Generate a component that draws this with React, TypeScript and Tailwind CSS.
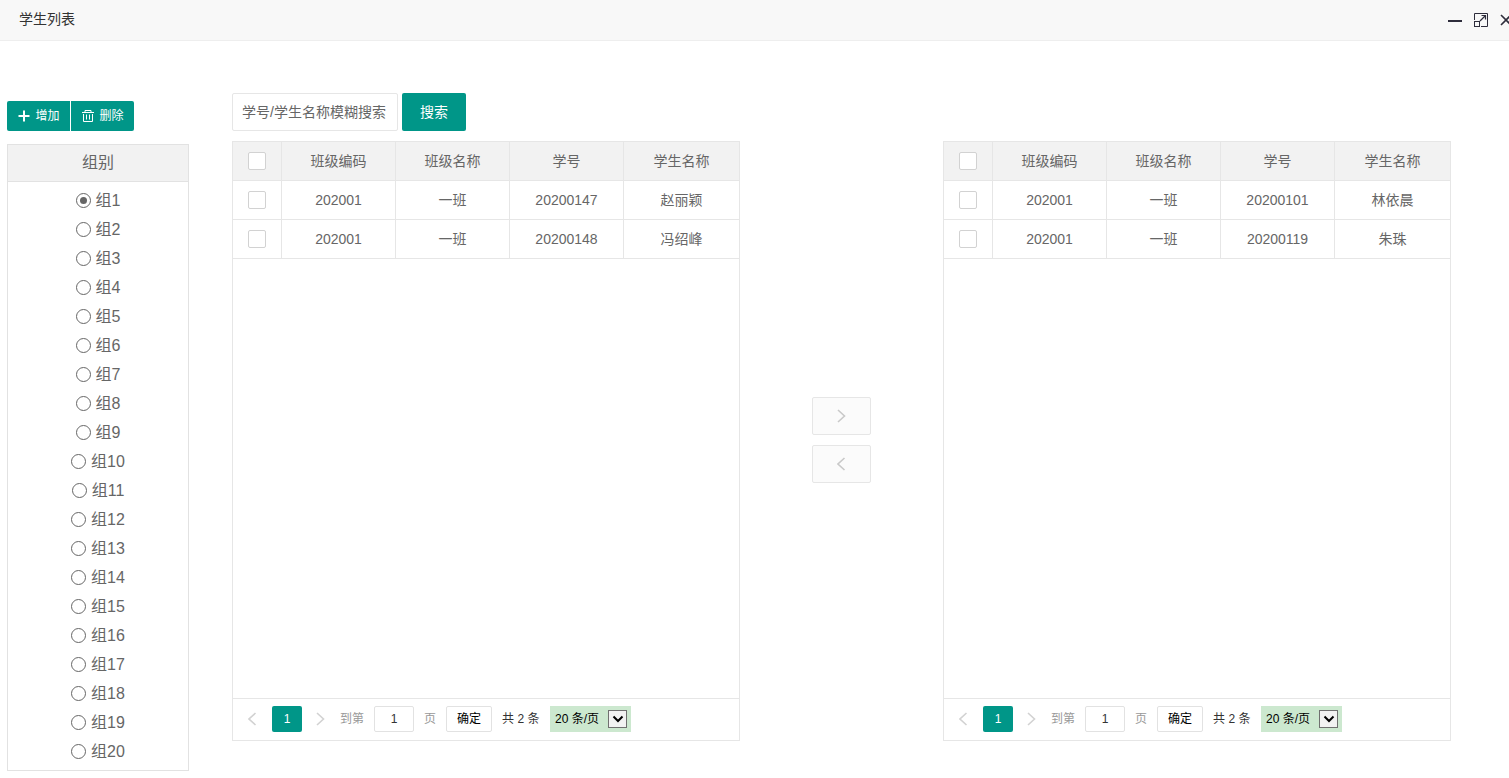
import React, { useState } from 'react';

type Student = { classCode: string; className: string; no: string; name: string };

const sourceStudents: Student[] = [
  { classCode: '202001', className: '一班', no: '20200147', name: '赵丽颖' },
  { classCode: '202001', className: '一班', no: '20200148', name: '冯绍峰' },
];

const groupStudents: Student[] = [
  { classCode: '202001', className: '一班', no: '20200101', name: '林依晨' },
  { classCode: '202001', className: '一班', no: '20200119', name: '朱珠' },
];

const groups = Array.from({ length: 20 }, (_, i) => `组${i + 1}`);

function Chevron({ direction, className }: { direction: 'left' | 'right'; className: string }) {
  return (
    <svg viewBox="0 0 10 14" className={className} fill="none" stroke="currentColor" strokeWidth="1.6" aria-hidden="true">
      <path d={direction === 'left' ? 'M7.5 1 1 7l6.5 6' : 'M1 1 7.5 7 1 13'} />
    </svg>
  );
}

function TitleBar() {
  return (
    <header className="flex h-[41px] items-center justify-between overflow-hidden border-b border-[#eeeeee] bg-[#f8f8f8] pl-[19px]">
      <h1 className="pb-0.5 text-sm leading-5 text-[#333333]">学生列表</h1>
      <div className="-mr-[3px] flex shrink-0 items-center gap-3 text-[#2e2d3c]">
        <button type="button" aria-label="最小化" className="block">
          <svg viewBox="0 0 14 14" className="size-[14px]" fill="none" stroke="currentColor" strokeWidth="2" aria-hidden="true">
            <path d="M0 8h14" />
          </svg>
        </button>
        <button type="button" aria-label="最大化" className="block">
          <svg viewBox="0 0 14 14" className="size-[14px]" fill="none" stroke="currentColor" strokeWidth="1" aria-hidden="true">
            <path d="M.5 7V.5h13v13H7" />
            <rect x=".5" y="8.500" width="5" height="5" />
            <path d="M6 8l5.500-5.500M7.500 2.500h4V6.500" strokeWidth="1.200" />
          </svg>
        </button>
        <button type="button" aria-label="关闭" className="block">
          <svg viewBox="0 0 12 12" className="size-3" fill="none" stroke="currentColor" strokeWidth="1.600" aria-hidden="true">
            <path d="M1 1l10 10M11 1L1 11" />
          </svg>
        </button>
      </div>
    </header>
  );
}

function GroupPanel() {
  const [selected, setSelected] = useState(groups[0]);
  return (
    <aside className="mt-2 w-[182px] shrink-0">
      <div className="flex gap-px text-xs text-white">
        <button type="button" className="flex h-[30px] w-[63px] items-center justify-center gap-1 rounded-l-xs bg-[#009688]">
          <svg viewBox="0 0 14 14" className="size-[14px]" fill="none" stroke="currentColor" strokeWidth="2" aria-hidden="true">
            <path d="M7 1.500v11M1.500 7h11" />
          </svg>
          增加
        </button>
        <button type="button" className="flex h-[30px] w-[63px] items-center justify-center gap-1 rounded-r-xs bg-[#009688]">
          <svg viewBox="0 0 14 14" className="size-[14px]" fill="none" stroke="currentColor" strokeWidth="1" aria-hidden="true">
            <path d="M1 3.500h12M4 3.500v-2h6v2M2.500 5v7.500h9V5M5.500 5.500v5M8.500 5.500v5" />
          </svg>
          删除
        </button>
      </div>
      <fieldset className="mt-[13px] border border-[#e2e2e2] text-base text-[#666666]">
        <div className="flex h-[37px] items-center justify-center border-b border-[#e2e2e2] bg-[#f2f2f2]">组别</div>
        <div className="pt-1 pb-1">
          {groups.map((group) => (
            <label key={group} className="flex h-[29px] items-center justify-center gap-[5px]">
              <input
                type="radio"
                name="group"
                checked={selected === group}
                onChange={() => setSelected(group)}
                className="size-[15px] appearance-none rounded-full border border-[#666666] bg-white bg-clip-content p-[3px] checked:bg-[#666666]"
              />
              {group}
            </label>
          ))}
        </div>
      </fieldset>
    </aside>
  );
}

const tick = 'block size-[18px] mx-auto appearance-none rounded-xs border border-[#d2d2d2] bg-white checked:bg-[#009688]';
const cell = 'border-r border-b border-[#e6e6e6] p-0 font-normal';
const lastCell = 'border-b border-[#e6e6e6] p-0 font-normal';

function StudentPanel({ id, students }: { id: string; students: Student[] }) {
  return (
    <section className="flex flex-col border border-[#e6e6e6]">
      <div className="min-h-[556px] flex-1">
        <table className="w-full table-fixed border-separate border-spacing-0 text-center text-sm text-[#666666]">
          <colgroup>
            <col className="w-[49px]" />
            <col className="w-[114px]" />
            <col className="w-[114px]" />
            <col className="w-[114px]" />
            <col />
          </colgroup>
          <thead>
            <tr className="h-[39px] bg-[#f2f2f2]">
              <th className={cell}>
                <input type="checkbox" aria-label="全选" className={tick} />
              </th>
              <th className={cell}>班级编码</th>
              <th className={cell}>班级名称</th>
              <th className={cell}>学号</th>
              <th className={lastCell}>学生名称</th>
            </tr>
          </thead>
          <tbody>
            {students.map((s) => (
              <tr key={s.no} className="h-[39px]">
                <td className={cell}>
                  <input type="checkbox" aria-label={s.name} className={tick} />
                </td>
                <td className={cell}>{s.classCode}</td>
                <td className={cell}>{s.className}</td>
                <td className={cell}>{s.no}</td>
                <td className={lastCell}>{s.name}</td>
              </tr>
            ))}
          </tbody>
        </table>
      </div>
      <Pager id={id} total={students.length} />
    </section>
  );
}

function Pager({ id, total }: { id: string; total: number }) {
  return (
    <nav aria-label="分页" className="flex h-[42px] items-center border-t border-[#e6e6e6] pb-0.5 pl-px text-xs whitespace-nowrap text-[#333333]">
      <button type="button" aria-label="上一页" className="flex h-[26px] w-[38px] items-center justify-center text-[#d2d2d2]">
        <Chevron direction="left" className="h-[14px] w-[10px]" />
      </button>
      <button type="button" className="h-[26px] w-[30px] rounded-xs bg-[#009688] text-white">
        1
      </button>
      <button type="button" aria-label="下一页" className="flex h-[26px] w-[38px] items-center justify-center text-[#d2d2d2]">
        <Chevron direction="right" className="h-[14px] w-[10px]" />
      </button>
      <div className="flex items-center gap-[10px]">
        <label htmlFor={`${id}-page`} className="text-[#999999]">到第</label>
        <input
          id={`${id}-page`}
          type="text"
          defaultValue="1"
          className="h-[26px] w-[40px] rounded-xs border border-[#e2e2e2] bg-white text-center"
        />
        <span className="text-[#999999]">页</span>
        <button type="button" className="h-[26px] w-[46px] rounded-xs border border-[#e2e2e2] bg-white text-black">
          确定
        </button>
        <span className="w-[38px]">共 {total} 条</span>
        <div className="relative">
          <select
            aria-label="每页条数"
            className="block h-[26px] w-[81px] appearance-none bg-[#cce8cf] pl-[5px] text-xs text-black"
          >
            <option>20 条/页</option>
            <option>50 条/页</option>
          </select>
          <span className="pointer-events-none absolute top-1 right-1 flex h-[18px] w-[19px] items-center justify-center border border-[#707070] bg-[#f2f2f2] text-black">
            <svg viewBox="0 0 12 8" className="h-2 w-3" fill="none" stroke="currentColor" strokeWidth="2" aria-hidden="true">
              <path d="M1.500 1.500 6 6l4.500-4.500" />
            </svg>
          </span>
        </div>
      </div>
    </nav>
  );
}

const moveButton = 'flex h-[38px] w-[59px] items-center justify-center rounded-xs border border-[#e6e6e6] bg-[#fbfbfb] text-[#c9c9c9]';

export default function App() {
  return (
    <div className="min-h-screen bg-white font-['Liberation_Sans','Noto_Sans_CJK_SC',sans-serif]">
      <TitleBar />
      <div className="flex items-start gap-[43px] pt-[52px] pr-[58px] pb-[7px] pl-[7px]">
        <GroupPanel />
        <main className="flex min-w-0 flex-1 flex-col gap-[10px]">
          <form className="flex gap-1 text-sm" onSubmit={(e) => e.preventDefault()}>
            <input
              type="text"
              aria-label="搜索学生"
              placeholder="学号/学生名称模糊搜索"
              className="h-[38px] w-[166px] rounded-xs border border-[#e6e6e6] pl-[9px] placeholder:text-[#666666]"
            />
            <button type="submit" className="h-[38px] w-[64px] rounded-xs bg-[#009688] text-white">
              搜索
            </button>
          </form>
          <div className="grid grid-cols-[1fr_203px_1fr]">
            <StudentPanel id="source" students={sourceStudents} />
            <div className="flex flex-col items-center justify-center gap-[10px] pb-0.5">
              <button type="button" aria-label="移到右侧" className={moveButton}>
                <Chevron direction="right" className="h-[14px] w-[10px]" />
              </button>
              <button type="button" aria-label="移到左侧" className={moveButton}>
                <Chevron direction="left" className="h-[14px] w-[10px]" />
              </button>
            </div>
            <StudentPanel id="target" students={groupStudents} />
          </div>
        </main>
      </div>
    </div>
  );
}
